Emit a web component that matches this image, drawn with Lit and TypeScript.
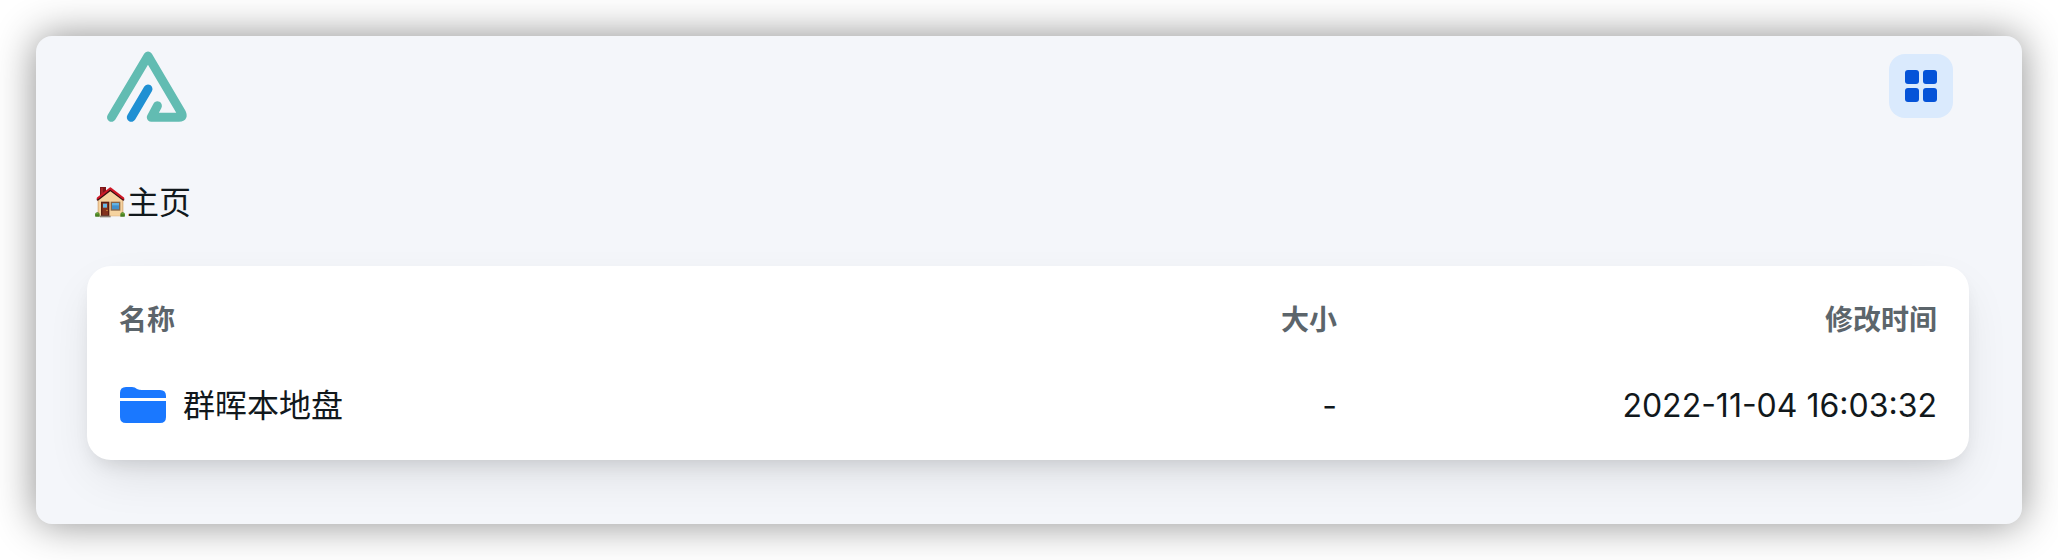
import { LitElement, html, css } from "lit";
import { customElement, state } from "lit/decorators.js";

interface Entry {
  name: string;
  size: string;
  modified: string;
}

@customElement("app-root")
export class AppRoot extends LitElement {
  static styles = css`
    :host {
      display: block;
      box-sizing: border-box;
      min-height: 100vh;
      padding: 36px;
      background: #fff;
      overflow: hidden;
      font-family: Inter, "Noto Sans CJK SC", sans-serif;
      font-size: 32px;
      line-height: 46px;
      color: #11181c;
    }
    .window {
      padding: 0 53px 64px 51px;
      border-radius: 16px;
      background: #f4f6fa;
      box-shadow: 0 0 40px rgba(0, 0, 0, 0.45);
    }
    .header {
      display: flex;
      align-items: center;
      justify-content: space-between;
      height: 100px;
      padding: 0 16px;
    }
    .brand,
    .logo,
    .glyph {
      display: block;
    }
    .logo {
      width: 88px;
      height: 80px;
    }
    .toggle {
      display: grid;
      place-items: center;
      width: 64px;
      height: 64px;
      padding: 0;
      border: 0;
      border-radius: 16px;
      background: #daeafd;
      color: #0553d8;
      cursor: pointer;
    }
    .glyph {
      width: 32px;
      height: 32px;
    }
    .crumbs {
      display: flex;
      padding: 44px 8px 40px;
    }
    .crumb {
      display: flex;
      align-items: center;
      color: inherit;
      text-decoration: none;
    }
    .card {
      padding: 11px 32px;
      border-radius: 24px;
      background: #fff;
      box-shadow: 0 20px 50px -10px rgba(0, 0, 0, 0.12),
        0 10px 20px -8px rgba(0, 0, 0, 0.12);
    }
    .list {
      width: 100%;
      table-layout: fixed;
      border-collapse: collapse;
    }
    .cell {
      height: 86px;
      padding: 0;
      text-align: right;
      vertical-align: middle;
      font-weight: 400;
      white-space: nowrap;
    }
    .label {
      font-size: 28px;
      font-weight: 600;
      color: #5c656b;
    }
    .name {
      width: 50%;
      text-align: left;
    }
    .size {
      width: 17%;
    }
    .time {
      width: 33%;
    }
    .entry {
      display: flex;
      align-items: center;
      gap: 16px;
      color: inherit;
      text-decoration: none;
    }
    .folder {
      display: block;
      width: 48px;
      height: 48px;
    }
  `;

  @state() private entries: Entry[] = [
    { name: "群晖本地盘", size: "-", modified: "2022-11-04 16:03:32" },
  ];

  private logo() {
    return html`<svg class="logo" viewBox="103 46 88 80" fill="none" stroke-width="9"
      stroke-linecap="round" stroke-linejoin="round" aria-hidden="true">
      <path stroke="#62bcb2" d="M111.5 117.3 148 56 181.3 112.5Q184 117.3 179 117.3H151.3L157.4 105.8" />
      <path stroke="#1f90d3" d="M131.3 117.3 148 89" />
    </svg>`;
  }

  private house() {
    return html`<svg class="glyph" viewBox="0 0 96 96" aria-hidden="true">
      <path fill="#7d1719" d="M15 0h18v32H15z" />
      <path fill="#a82528" d="M18 3h6v24h-6z" />
      <path fill="#d9ad7a" d="M8 36 46 6l39 30v52H8z" />
      <path fill="#f5d3a0" d="M11 36 46 11l36 25v50H11z" />
      <path fill="none" stroke="#3a0d10" stroke-width="6" stroke-linejoin="round" stroke-linecap="round" d="M8 38 46 9l39 29" />
      <path fill="none" stroke="#cf1726" stroke-width="6" stroke-linejoin="round" stroke-linecap="round" d="M8 34 46 4l39 30" />
      <path fill="#5a1d12" d="M18 44h25v43H18z" />
      <path fill="#83321d" d="M22 48h17v36H22z" />
      <path fill="#67b9e8" d="M24 50h12v12H24z" />
      <circle cx="36" cy="70" r="2" fill="#f0b34a" />
      <path fill="#866648" d="M47 44h29v27H47z" />
      <path fill="#3f8fcc" d="M51 48h21v19H51z" />
      <path fill="#62b1e2" d="M51 48h21v7H51z" />
      <path fill="#8c8074" d="M15 86h32v5H15z" />
      <path fill="#467f22" d="M0 84q0-7 6-8 8-1 8 8v5H1zM76 84q0-9 8-8 6 1 6 8l-1 5H76z" />
      <path fill="#6fa836" d="M2 82q1-4 5-4 4 0 5 4zM78 82q1-4 5-4 4 0 5 4z" />
    </svg>`;
  }

  private grid() {
    return html`<svg class="glyph" viewBox="0 0 32 32" fill="currentColor" aria-hidden="true">
      <rect width="14" height="14" rx="3" />
      <rect x="18" width="14" height="14" rx="3" />
      <rect y="18" width="14" height="14" rx="3" />
      <rect x="18" y="18" width="14" height="14" rx="3" />
    </svg>`;
  }

  private folder() {
    return html`<svg class="folder" viewBox="0 0 48 48" fill="#1a78ff" aria-hidden="true">
      <path d="M1 16V11Q1 5 7 5H13Q16 5 18 7 20 8 23 8H41Q47 8 47 14V16Z" />
      <path d="M1 19H47V35Q47 41 41 41H7Q1 41 1 35Z" />
    </svg>`;
  }

  render() {
    return html`
      <div class="window">
        <header class="header">
          <a class="brand" href="#" aria-label="AList">${this.logo()}</a>
          <button class="toggle" type="button" aria-label="网格视图">${this.grid()}</button>
        </header>
        <nav class="crumbs">
          <a class="crumb" href="#">${this.house()}<span>主页</span></a>
        </nav>
        <main class="card">
          <table class="list">
            <thead>
              <tr>
                <th class="cell label name" scope="col">名称</th>
                <th class="cell label size" scope="col">大小</th>
                <th class="cell label time" scope="col">修改时间</th>
              </tr>
            </thead>
            <tbody>
              ${this.entries.map(
                (e) => html`<tr>
                  <td class="cell name">
                    <a class="entry" href="#">${this.folder()}<span>${e.name}</span></a>
                  </td>
                  <td class="cell size">${e.size}</td>
                  <td class="cell time">${e.modified}</td>
                </tr>`
              )}
            </tbody>
          </table>
        </main>
      </div>
    `;
  }
}
